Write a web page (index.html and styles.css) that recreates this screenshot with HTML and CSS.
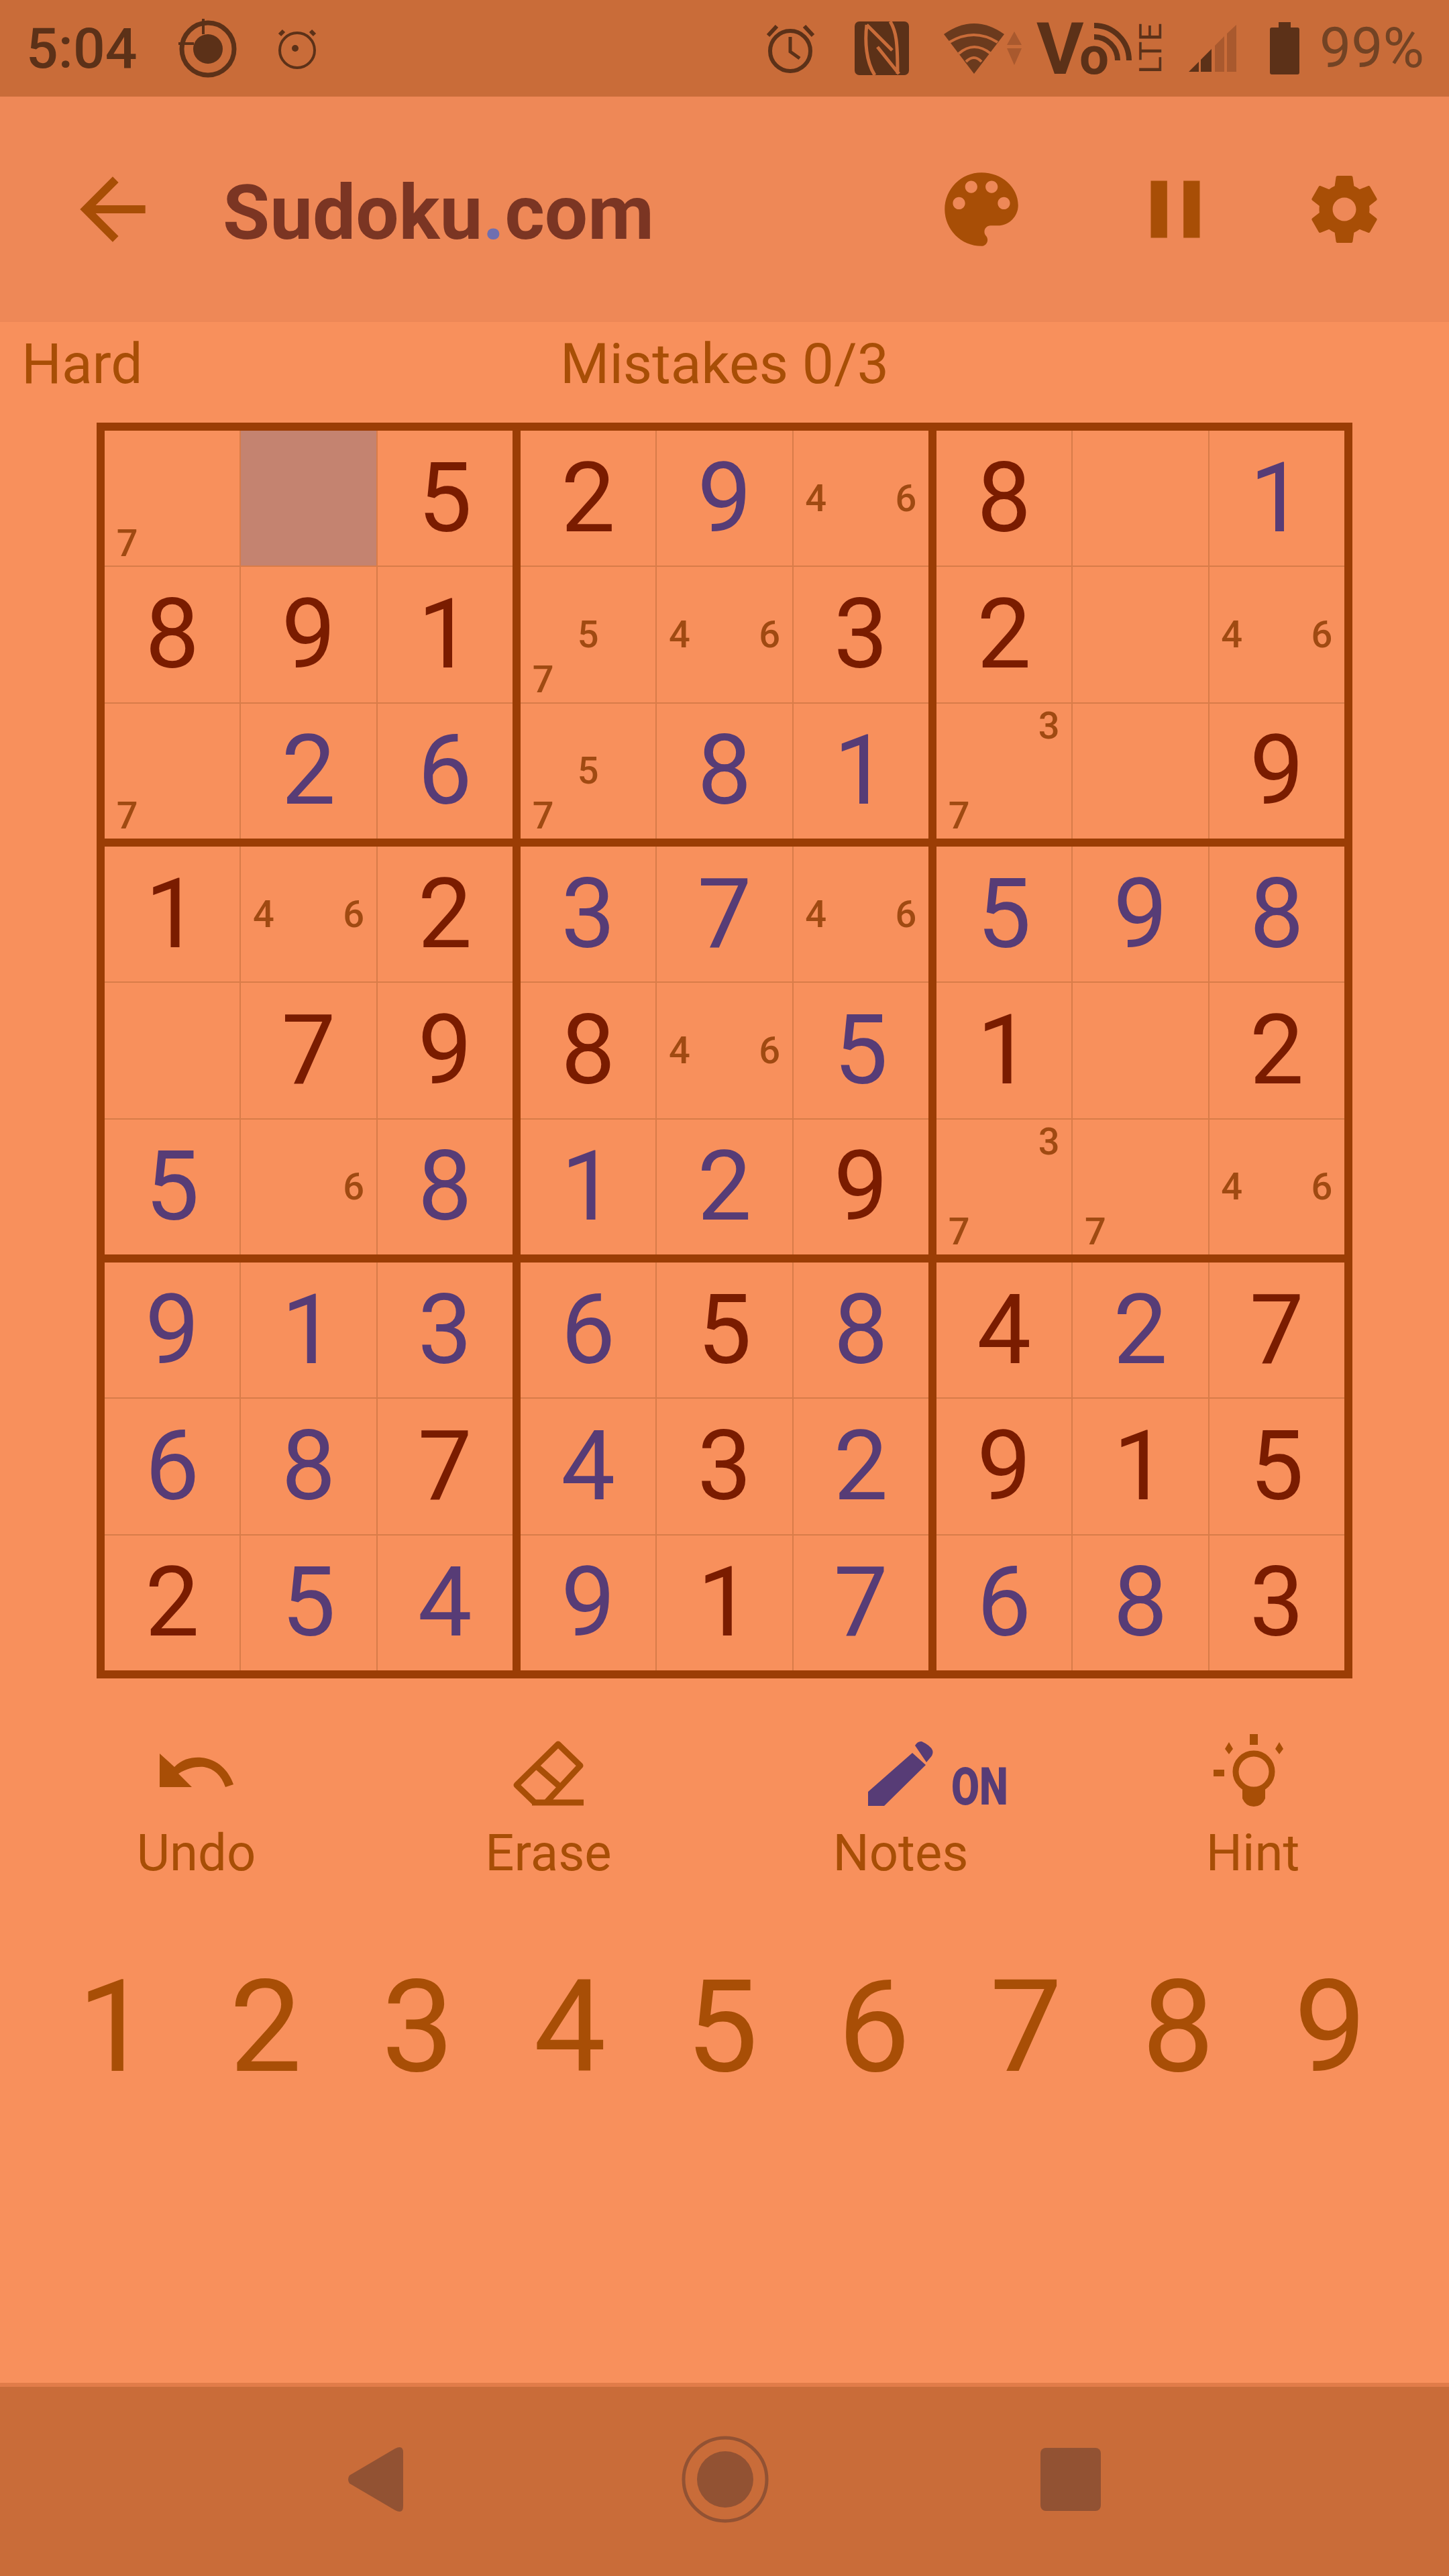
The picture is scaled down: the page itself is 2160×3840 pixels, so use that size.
FILE: index.html
```html
<!DOCTYPE html>
<html lang="en">
<head>
    <meta charset="UTF-8">
    <title>Sudoku.com</title>
    <link rel="stylesheet" href="styles.css">
</head>
<body>
<div id="app">
    <div class="status-bar">
        <span class="time">5:04</span>
        <svg class="sb-target" viewBox="0 0 90 90"><circle cx="45" cy="46" r="39" fill="none" stroke="#5c3118" stroke-width="7"/><circle cx="45" cy="46" r="22" fill="#5c3118"/><path d="M38 1V24M1 38H24" stroke="#5c3118" stroke-width="4"/></svg>
        <svg class="sb-alarm-small" viewBox="0 0 60 61"><circle cx="30" cy="33" r="26" fill="none" stroke="#5c3118" stroke-width="4"/><circle cx="27" cy="30" r="5" fill="#5c3118"/><path d="M4 10L10 4M56 10L50 4" stroke="#5c3118" stroke-width="6"/></svg>
        <div class="status-right">
            <svg class="sb-alarm" viewBox="0 0 73 74"><circle cx="36" cy="41" r="30" fill="none" stroke="#5c3118" stroke-width="6"/><path d="M36 20V42L50 52" fill="none" stroke="#5c3118" stroke-width="5"/><path d="M3 18L16 4M70 18L57 4" stroke="#5c3118" stroke-width="6"/></svg>
            <svg class="sb-nfc" viewBox="0 0 81 80"><rect width="81" height="80" rx="7" fill="#5c3118"/><path d="M18 5L56 43M18 5C15 30 17 60 30 80M34 38L66 78M53 0C62 15 64 30 64 78" fill="none" stroke="#c96c39" stroke-width="5"/></svg>
            <svg class="sb-wifi" viewBox="0 0 90 75"><path d="M45 75L0 16Q45 -16 90 16Z" fill="#6b3a1d"/><path d="M8 28Q45 6 80 28M22 45Q45 25 70 45M33 57Q45 45 56 57" fill="none" stroke="#c96c39" stroke-width="4"/></svg>
            <svg class="sb-arrows" viewBox="0 0 24 50"><path d="M12 0L23 20H1ZM12 50L1 25H23Z" fill="#a9592e"/></svg>
            <svg class="sb-volte" viewBox="0 0 187 78">
                <text class="vo-v" x="-1" y="77">V</text>
                <text class="vo-o" x="63" y="77">o</text>
                <path d="M85 22A35 35 0 0 1 120 57M85 5A52 52 0 0 1 137 57" fill="none" stroke="#5c3118" stroke-width="8"/>
                <text class="vo-lte" transform="translate(185 77) rotate(-90)" textLength="76" lengthAdjust="spacingAndGlyphs">LTE</text>
            </svg>
            <svg class="sb-signal" viewBox="0 0 72 70"><path d="M0 70L15 55V70ZM18 52L34 36V70H18Z" fill="#5c3118"/><path d="M39 31L53 17V70H39ZM57 13L71 0V70H57Z" fill="#a9592e"/></svg>
            <svg class="sb-battery" viewBox="0 0 44 78"><path d="M13 0H31V8H41Q44 8 44 11V75Q44 78 41 78H3Q0 78 0 75V11Q0 8 3 8H13Z" fill="#5c3118"/></svg>
            <span class="percent">99%</span>
        </div>
    </div>

    <div class="header">
        <svg class="hd-icon" viewBox="0 0 24 24"><path d="M20 11H7.83l5.59-5.59L12 4l-8 8 8 8 1.41-1.41L7.83 13H20v-2z"/></svg>
        <h1 class="title">Sudoku<span class="title-dot">.</span>com</h1>
        <svg class="hd-icon hd-palette" viewBox="0 0 24 24"><path d="M12 3c-4.97 0-9 4.03-9 9s4.03 9 9 9c.83 0 1.5-.67 1.5-1.5 0-.39-.15-.74-.39-1.01-.23-.26-.38-.61-.38-.99 0-.83.67-1.5 1.5-1.5H16c2.76 0 5-2.24 5-5 0-4.42-4.03-8-9-8zm-5.5 9c-.83 0-1.5-.67-1.5-1.5S5.67 9 6.5 9 8 9.67 8 10.5 7.33 12 6.5 12zm3-4C8.67 8 8 7.33 8 6.5S8.67 5 9.5 5s1.5.67 1.5 1.5S10.33 8 9.5 8zm5 0c-.83 0-1.5-.67-1.5-1.5S13.67 5 14.5 5s1.5.67 1.5 1.5S15.33 8 14.5 8zm3 4c-.83 0-1.5-.67-1.5-1.5S16.67 9 17.5 9s1.5.67 1.5 1.5-.67 1.5-1.5 1.5z"/></svg>
        <svg class="hd-icon hd-pause" viewBox="0 0 24 24"><path d="M6 19h4V5H6v14zm8-14v14h4V5h-4z"/></svg>
        <svg class="hd-icon hd-gear" viewBox="0 0 24 24"><path fill-rule="evenodd" d="M19.43 12.98c.04-.32.07-.64.07-.98s-.03-.66-.07-.98l2.11-1.65c.19-.15.24-.42.12-.64l-2-3.46c-.12-.22-.39-.3-.61-.22l-2.49 1c-.52-.4-1.08-.73-1.69-.98l-.38-2.65C14.46 2.18 14.25 2 14 2h-4c-.25 0-.46.18-.49.42l-.38 2.65c-.61.25-1.17.59-1.69.98l-2.49-1c-.23-.09-.49 0-.61.22l-2 3.46c-.13.22-.07.49.12.64l2.11 1.65c-.04.32-.07.65-.07.98s.03.66.07.98l-2.11 1.65c-.19.15-.24.42-.12.64l2 3.46c.12.22.39.3.61.22l2.49-1c.52.4 1.08.73 1.69.98l.38 2.65c.03.24.24.42.49.42h4c.25 0 .46-.18.49-.42l.38-2.65c.61-.25 1.17-.59 1.69-.98l2.49 1c.23.09.49 0 .61-.22l2-3.46c.12-.22.07-.49-.12-.64l-2.11-1.65zM12 15.5c-1.93 0-3.5-1.57-3.5-3.5s1.57-3.5 3.5-3.5 3.5 1.57 3.5 3.5-1.57 3.5-3.5 3.5z"/></svg>
    </div>

    <div class="stats">
        <span class="level">Hard</span>
        <span class="mistakes">Mistakes 0/3</span>
    </div>

    <div class="board">
        <div class="box">
            <div class="cell notes"><i class="n7">7</i></div>
            <div class="cell selected"></div>
            <div class="cell given">5</div>
            <div class="cell given">8</div>
            <div class="cell given">9</div>
            <div class="cell given">1</div>
            <div class="cell notes"><i class="n7">7</i></div>
            <div class="cell user">2</div>
            <div class="cell user">6</div>
        </div>
        <div class="box">
            <div class="cell given">2</div>
            <div class="cell user">9</div>
            <div class="cell notes"><i class="n4">4</i><i class="n6">6</i></div>
            <div class="cell notes"><i class="n5">5</i><i class="n7">7</i></div>
            <div class="cell notes"><i class="n4">4</i><i class="n6">6</i></div>
            <div class="cell given">3</div>
            <div class="cell notes"><i class="n5">5</i><i class="n7">7</i></div>
            <div class="cell user">8</div>
            <div class="cell user">1</div>
        </div>
        <div class="box">
            <div class="cell given">8</div>
            <div class="cell"></div>
            <div class="cell user">1</div>
            <div class="cell given">2</div>
            <div class="cell"></div>
            <div class="cell notes"><i class="n4">4</i><i class="n6">6</i></div>
            <div class="cell notes"><i class="n3">3</i><i class="n7">7</i></div>
            <div class="cell"></div>
            <div class="cell given">9</div>
        </div>
        <div class="box">
            <div class="cell given">1</div>
            <div class="cell notes"><i class="n4">4</i><i class="n6">6</i></div>
            <div class="cell given">2</div>
            <div class="cell"></div>
            <div class="cell given">7</div>
            <div class="cell given">9</div>
            <div class="cell user">5</div>
            <div class="cell notes"><i class="n6">6</i></div>
            <div class="cell user">8</div>
        </div>
        <div class="box">
            <div class="cell user">3</div>
            <div class="cell user">7</div>
            <div class="cell notes"><i class="n4">4</i><i class="n6">6</i></div>
            <div class="cell given">8</div>
            <div class="cell notes"><i class="n4">4</i><i class="n6">6</i></div>
            <div class="cell user">5</div>
            <div class="cell user">1</div>
            <div class="cell user">2</div>
            <div class="cell given">9</div>
        </div>
        <div class="box">
            <div class="cell user">5</div>
            <div class="cell user">9</div>
            <div class="cell user">8</div>
            <div class="cell given">1</div>
            <div class="cell"></div>
            <div class="cell given">2</div>
            <div class="cell notes"><i class="n3">3</i><i class="n7">7</i></div>
            <div class="cell notes"><i class="n7">7</i></div>
            <div class="cell notes"><i class="n4">4</i><i class="n6">6</i></div>
        </div>
        <div class="box">
            <div class="cell user">9</div>
            <div class="cell user">1</div>
            <div class="cell user">3</div>
            <div class="cell user">6</div>
            <div class="cell user">8</div>
            <div class="cell given">7</div>
            <div class="cell given">2</div>
            <div class="cell user">5</div>
            <div class="cell user">4</div>
        </div>
        <div class="box">
            <div class="cell user">6</div>
            <div class="cell given">5</div>
            <div class="cell user">8</div>
            <div class="cell user">4</div>
            <div class="cell given">3</div>
            <div class="cell user">2</div>
            <div class="cell user">9</div>
            <div class="cell given">1</div>
            <div class="cell user">7</div>
        </div>
        <div class="box">
            <div class="cell given">4</div>
            <div class="cell user">2</div>
            <div class="cell given">7</div>
            <div class="cell given">9</div>
            <div class="cell given">1</div>
            <div class="cell given">5</div>
            <div class="cell user">6</div>
            <div class="cell user">8</div>
            <div class="cell given">3</div>
        </div>
    </div>

    <div class="actions">
        <div class="action">
            <div class="action-icon">
                <svg class="ic-undo" viewBox="0 0 110 51"><path d="M0 0V50H48L28 30C40 22 55 19 66 20C80 22 92 32 98 50L110 46C103 25 86 8 62 6C48 5 34 8 22 20Z"/></svg>
            </div>
            <span class="action-label">Undo</span>
        </div>
        <div class="action">
            <div class="action-icon">
                <svg class="ic-erase" viewBox="0 0 105 97"><path class="line" d="M67 5L100 37L49 92H32L5 66ZM35 38L68 67M28 92H105"/></svg>
            </div>
            <span class="action-label">Erase</span>
        </div>
        <div class="action">
            <div class="action-icon">
                <div class="notes-icon">
                    <svg class="ic-pencil" viewBox="0 0 97 97"><path d="M0 97V76L66 18L86 36L24 97ZM70 7Q74 0 80 1Q93 7 96 14Q98 20 92 26L87 32Z"/></svg>
                    <span class="on-badge">ON</span>
                </div>
            </div>
            <span class="action-label">Notes</span>
        </div>
        <div class="action">
            <div class="action-icon">
                <svg class="ic-hint" viewBox="0 0 107 108"><circle class="line" cx="60" cy="56" r="27"/><path d="M54 0H66V16H54ZM0 53H16V63H0ZM23 12L29 22L23 30L17 22ZM98 12L104 22L98 30L92 22ZM43 82H77V96Q72 108 60 108Q48 108 43 96Z"/></svg>
            </div>
            <span class="action-label">Hint</span>
        </div>
    </div>

    <div class="numpad">
        <span>1</span><span>2</span><span>3</span><span>4</span><span>5</span><span>6</span><span>7</span><span>8</span><span>9</span>
    </div>

    <div class="nav-bar">
        <svg class="nav-back" viewBox="0 0 84 96"><path d="M72 2Q84 -4 84 8V88Q84 100 72 94L4 54Q0 48 4 42Z"/></svg>
        <svg class="nav-home" viewBox="0 0 130 130"><circle cx="65" cy="65" r="62" fill="none" stroke="#925233" stroke-width="5"/><circle cx="65" cy="65" r="42"/></svg>
        <div class="nav-square"></div>
    </div>
</div>
</body>
</html>
```

FILE: styles.css
```css
* {
    box-sizing: border-box;
    margin: 0;
    padding: 0;
}

body {
    background-color: #f8905c;
    font-family: Roboto, "Noto Sans", sans-serif;
}

#app {
    display: flex;
    flex-direction: column;
    width: 2160px;
    height: 3840px;
}

/* status bar */
.status-bar {
    display: flex;
    align-items: center;
    flex: none;
    height: 144px;
    padding: 0 37px 0 39px;
    background-color: #c96c39;
    color: #5c3118;
    font-size: 84px;
}

.time {
    width: 162px;
    font-weight: 500;
}

.percent {
    margin-left: 30px;
    color: #734324;
    line-height: 1;
}

.status-right {
    display: flex;
    align-items: center;
    margin-left: auto;
}

.sb-target {
    width: 90px;
    height: 90px;
    margin-left: 64px;
}

.sb-alarm-small {
    width: 60px;
    height: 61px;
    margin-left: 58px;
}

.sb-alarm {
    width: 73px;
    height: 74px;
}

.sb-nfc {
    width: 81px;
    height: 80px;
    margin-left: 59px;
}

.sb-wifi {
    width: 90px;
    height: 75px;
    margin-left: 52px;
}

.sb-arrows {
    width: 24px;
    height: 50px;
    margin-left: 3px;
}

.sb-volte {
    width: 187px;
    height: 78px;
    margin-left: 22px;
    fill: #5c3118;
    overflow: visible;
}

.vo-v {
    font-size: 108px;
    font-weight: 700;
}

.vo-o {
    font-size: 78px;
    font-weight: 700;
}

.vo-lte {
    font-size: 46px;
}

.sb-signal {
    width: 72px;
    height: 70px;
    margin-left: 39px;
}

.sb-battery {
    width: 44px;
    height: 78px;
    margin-left: 49px;
}

/* header */
.header {
    display: flex;
    align-items: center;
    flex: none;
    height: 336px;
    padding-left: 95px;
    background-color: #ee8857;
}

.hd-icon {
    flex: none;
    width: 146px;
    height: 146px;
    fill: #a84e06;
}

.title {
    margin-left: 91px;
    padding-top: 10px;
    color: #7b3523;
    font-size: 114px;
    font-weight: 700;
    line-height: 1;
}

.title-dot {
    color: #6f6fb0;
}

.hd-palette {
    margin-left: auto;
}

.hd-pause {
    margin-left: 143px;
}

.hd-gear {
    width: 120px;
    height: 120px;
    margin-left: 119px;
    margin-right: 96px;
}

/* level and mistakes */
.stats {
    display: grid;
    grid-template-columns: 1fr auto 1fr;
    flex: none;
    height: 150px;
    padding: 0 32px;
    color: #a84e06;
    font-size: 84px;
    line-height: 126px;
}

.mistakes {
    grid-column: 2;
}

/* board */
.board {
    display: grid;
    grid-template-columns: repeat(3, 608px);
    grid-template-rows: repeat(3, 608px);
    gap: 12px;
    flex: none;
    width: 1872px;
    height: 1872px;
    margin: 0 auto;
    padding: 12px;
    background-color: #9b3d05;
}

.box {
    display: grid;
    grid-template-columns: repeat(3, 1fr);
    grid-template-rows: repeat(3, 1fr);
    gap: 2px;
    background-color: #d87c49;
}

.cell {
    display: grid;
    place-items: center;
    background-color: #f8905c;
    font-size: 144px;
    line-height: 1;
}

.given {
    color: #7a1c00;
}

.user {
    color: #573c76;
}

.selected {
    background-color: #c48370;
}

.notes {
    grid-template-columns: repeat(3, 1fr);
    grid-template-rows: repeat(3, 1fr);
    color: #a04a12;
    font-size: 56px;
    font-weight: 500;
}

.notes i {
    font-style: normal;
}

.n3 {
    grid-area: 1 / 3;
}

.n4 {
    grid-area: 2 / 1;
}

.n5 {
    grid-area: 2 / 2;
}

.n6 {
    grid-area: 2 / 3;
}

.n7 {
    grid-area: 3 / 1;
}

/* actions */
.actions {
    display: grid;
    grid-template-columns: repeat(4, 525px);
    flex: none;
    margin-top: 83px;
    padding: 0 30px;
}

.action {
    display: flex;
    flex-direction: column;
    align-items: center;
    gap: 19px;
}

.action-icon {
    display: flex;
    align-items: center;
    justify-content: center;
    height: 108px;
    fill: #a84e06;
}

.action-label {
    color: #a84e06;
    font-size: 76px;
    line-height: 100px;
}

.line {
    fill: none;
    stroke: #a84e06;
    stroke-width: 9;
    stroke-linejoin: round;
}

.ic-undo {
    width: 110px;
    height: 51px;
}

.ic-erase {
    width: 105px;
    height: 97px;
    margin-top: 8px;
}

.notes-icon {
    position: relative;
    width: 97px;
    height: 97px;
    margin-top: 8px;
}

.ic-pencil {
    display: block;
    width: 97px;
    height: 97px;
    fill: #573c76;
}

.on-badge {
    position: absolute;
    left: 124px;
    top: 34px;
    color: #573c76;
    font-size: 78px;
    font-weight: 900;
    line-height: 70px;
    transform: scaleX(0.78);
    transform-origin: left center;
}

.ic-hint {
    width: 107px;
    height: 108px;
    margin-right: 10px;
}

/* number pad */
.numpad {
    display: grid;
    grid-template-columns: repeat(9, 226.7px);
    flex: none;
    margin-top: 90px;
    padding: 0 56px;
    color: #a84e06;
    font-size: 192px;
    line-height: 240px;
    text-align: center;
}

/* nav bar */
.nav-bar {
    display: flex;
    align-items: center;
    flex: none;
    height: 288px;
    margin-top: auto;
    padding-left: 517px;
    border-top: 6px solid #e17c49;
    background-color: #c96c39;
    fill: #925233;
}

.nav-back {
    width: 84px;
    height: 96px;
    margin-top: -6px;
}

.nav-home {
    width: 130px;
    height: 130px;
    margin-left: 415px;
    margin-top: -6px;
}

.nav-square {
    width: 90px;
    height: 94px;
    margin-left: 405px;
    margin-top: -6px;
    border-radius: 8px;
    background-color: #925233;
}
```
